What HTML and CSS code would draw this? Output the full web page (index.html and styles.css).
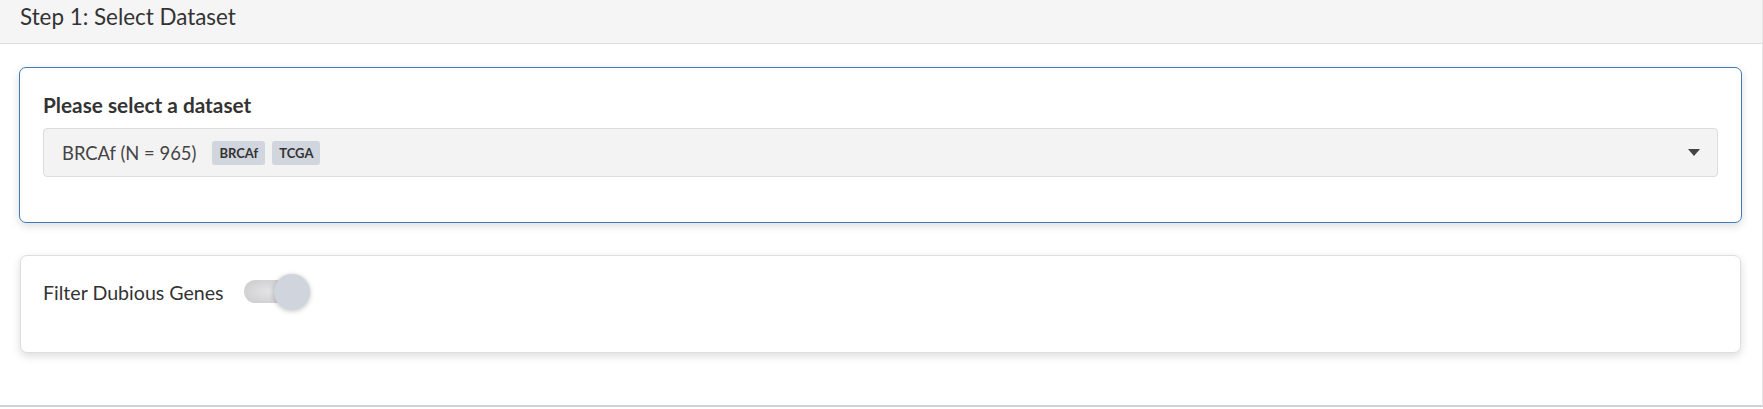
FILE: index.html
```html
<!DOCTYPE html>
<html>
<head>
<meta charset="utf-8">
<link rel="stylesheet" href="styles.css">
</head>
<body>
<div class="panel">
  <div class="panel-heading">Step 1: Select Dataset</div>
  <div class="panel-body">
    <div class="card card-active">
      <div class="field-label">Please select a dataset</div>
      <div class="select">
        <span class="select-text">BRCAf (N = 965)</span>
        <span class="badge">BRCAf</span>
        <span class="badge">TCGA</span>
        <span class="caret"></span>
      </div>
    </div>
    <div class="card card-plain">
      <div class="switch-row">
        <span class="switch-label">Filter Dubious Genes</span>
        <span class="switch">
          <span class="switch-track"></span>
          <span class="switch-knob"></span>
        </span>
      </div>
    </div>
  </div>
</div>
</body>
</html>
```
FILE: styles.css
```css
* { box-sizing: border-box; }
html, body { margin: 0; padding: 0; background: #fff; }
body {
  font-family: "Source Sans Pro", Lato, "Liberation Sans", sans-serif;
  color: #333;
  width: 1763px;
  height: 409px;
  overflow: hidden;
}
.panel {
  height: 407px;
  border-right: 1px solid #e6e6e6;
  border-bottom: 2px solid #cfd2d6;
}
.panel-heading {
  height: 44px;
  background: #f5f5f5;
  border-bottom: 1px solid #dcdcdc;
  padding: 3px 0 0 20px;
  font-size: 22.4px;
  line-height: 28px;
  color: #333;
}
.panel-body {
  padding: 23px 20px 0 19px;
  display: flex;
  flex-direction: column;
  gap: 32px;
}
.card {
  background: #fff;
  border-radius: 7px;
  box-shadow: 0 3px 9px rgba(0,0,0,0.14);
}
.card-active {
  height: 156px;
  border: 1px solid #3d7cbd;
  padding: 25px 23px 0 23px;
}
.card-plain {
  height: 98px;
  margin: 0 1px;
  border: 1px solid #dedede;
  padding: 18px 22px 0 22px;
}
.field-label {
  font-weight: 700;
  font-size: 20.8px;
  line-height: 24px;
  color: #333;
  margin-bottom: 11px;
}
.select {
  height: 49px;
  background: #f3f3f3;
  border: 1px solid #dcdcdc;
  border-radius: 4px;
  display: flex;
  align-items: center;
  padding: 0 0 0 18px;
}
.select-text {
  font-size: 18.4px;
  color: #444;
  margin-right: 16px;
}
.badge {
  display: inline-flex;
  align-items: center;
  justify-content: center;
  height: 24px;
  padding: 0 7px;
  margin-right: 7px;
  background: #d1d5dd;
  border-radius: 3px;
  font-size: 13px;
  font-weight: 700;
  color: #333;
}
.caret {
  margin-left: auto;
  margin-right: 17px;
  width: 0;
  height: 0;
  border-left: 6px solid transparent;
  border-right: 6px solid transparent;
  border-top: 7px solid #444;
}
.switch-row {
  display: flex;
  align-items: center;
  gap: 20px;
}
.switch-label {
  font-size: 19.6px;
  color: #333;
}
.switch {
  position: relative;
  width: 66px;
  height: 36px;
}
.switch-track {
  position: absolute;
  left: 0;
  top: 6px;
  width: 50px;
  height: 23px;
  border-radius: 12px;
  background: radial-gradient(ellipse at 50% 50%, #e4e4e6 0%, #d2d2d5 70%, #c8c8cc 100%);
}
.switch-knob {
  position: absolute;
  left: 30px;
  top: 0;
  width: 36px;
  height: 36px;
  border-radius: 50%;
  background: #d0d5dd;
  box-shadow: 0 1px 5px rgba(0,0,0,0.25);
}
```
